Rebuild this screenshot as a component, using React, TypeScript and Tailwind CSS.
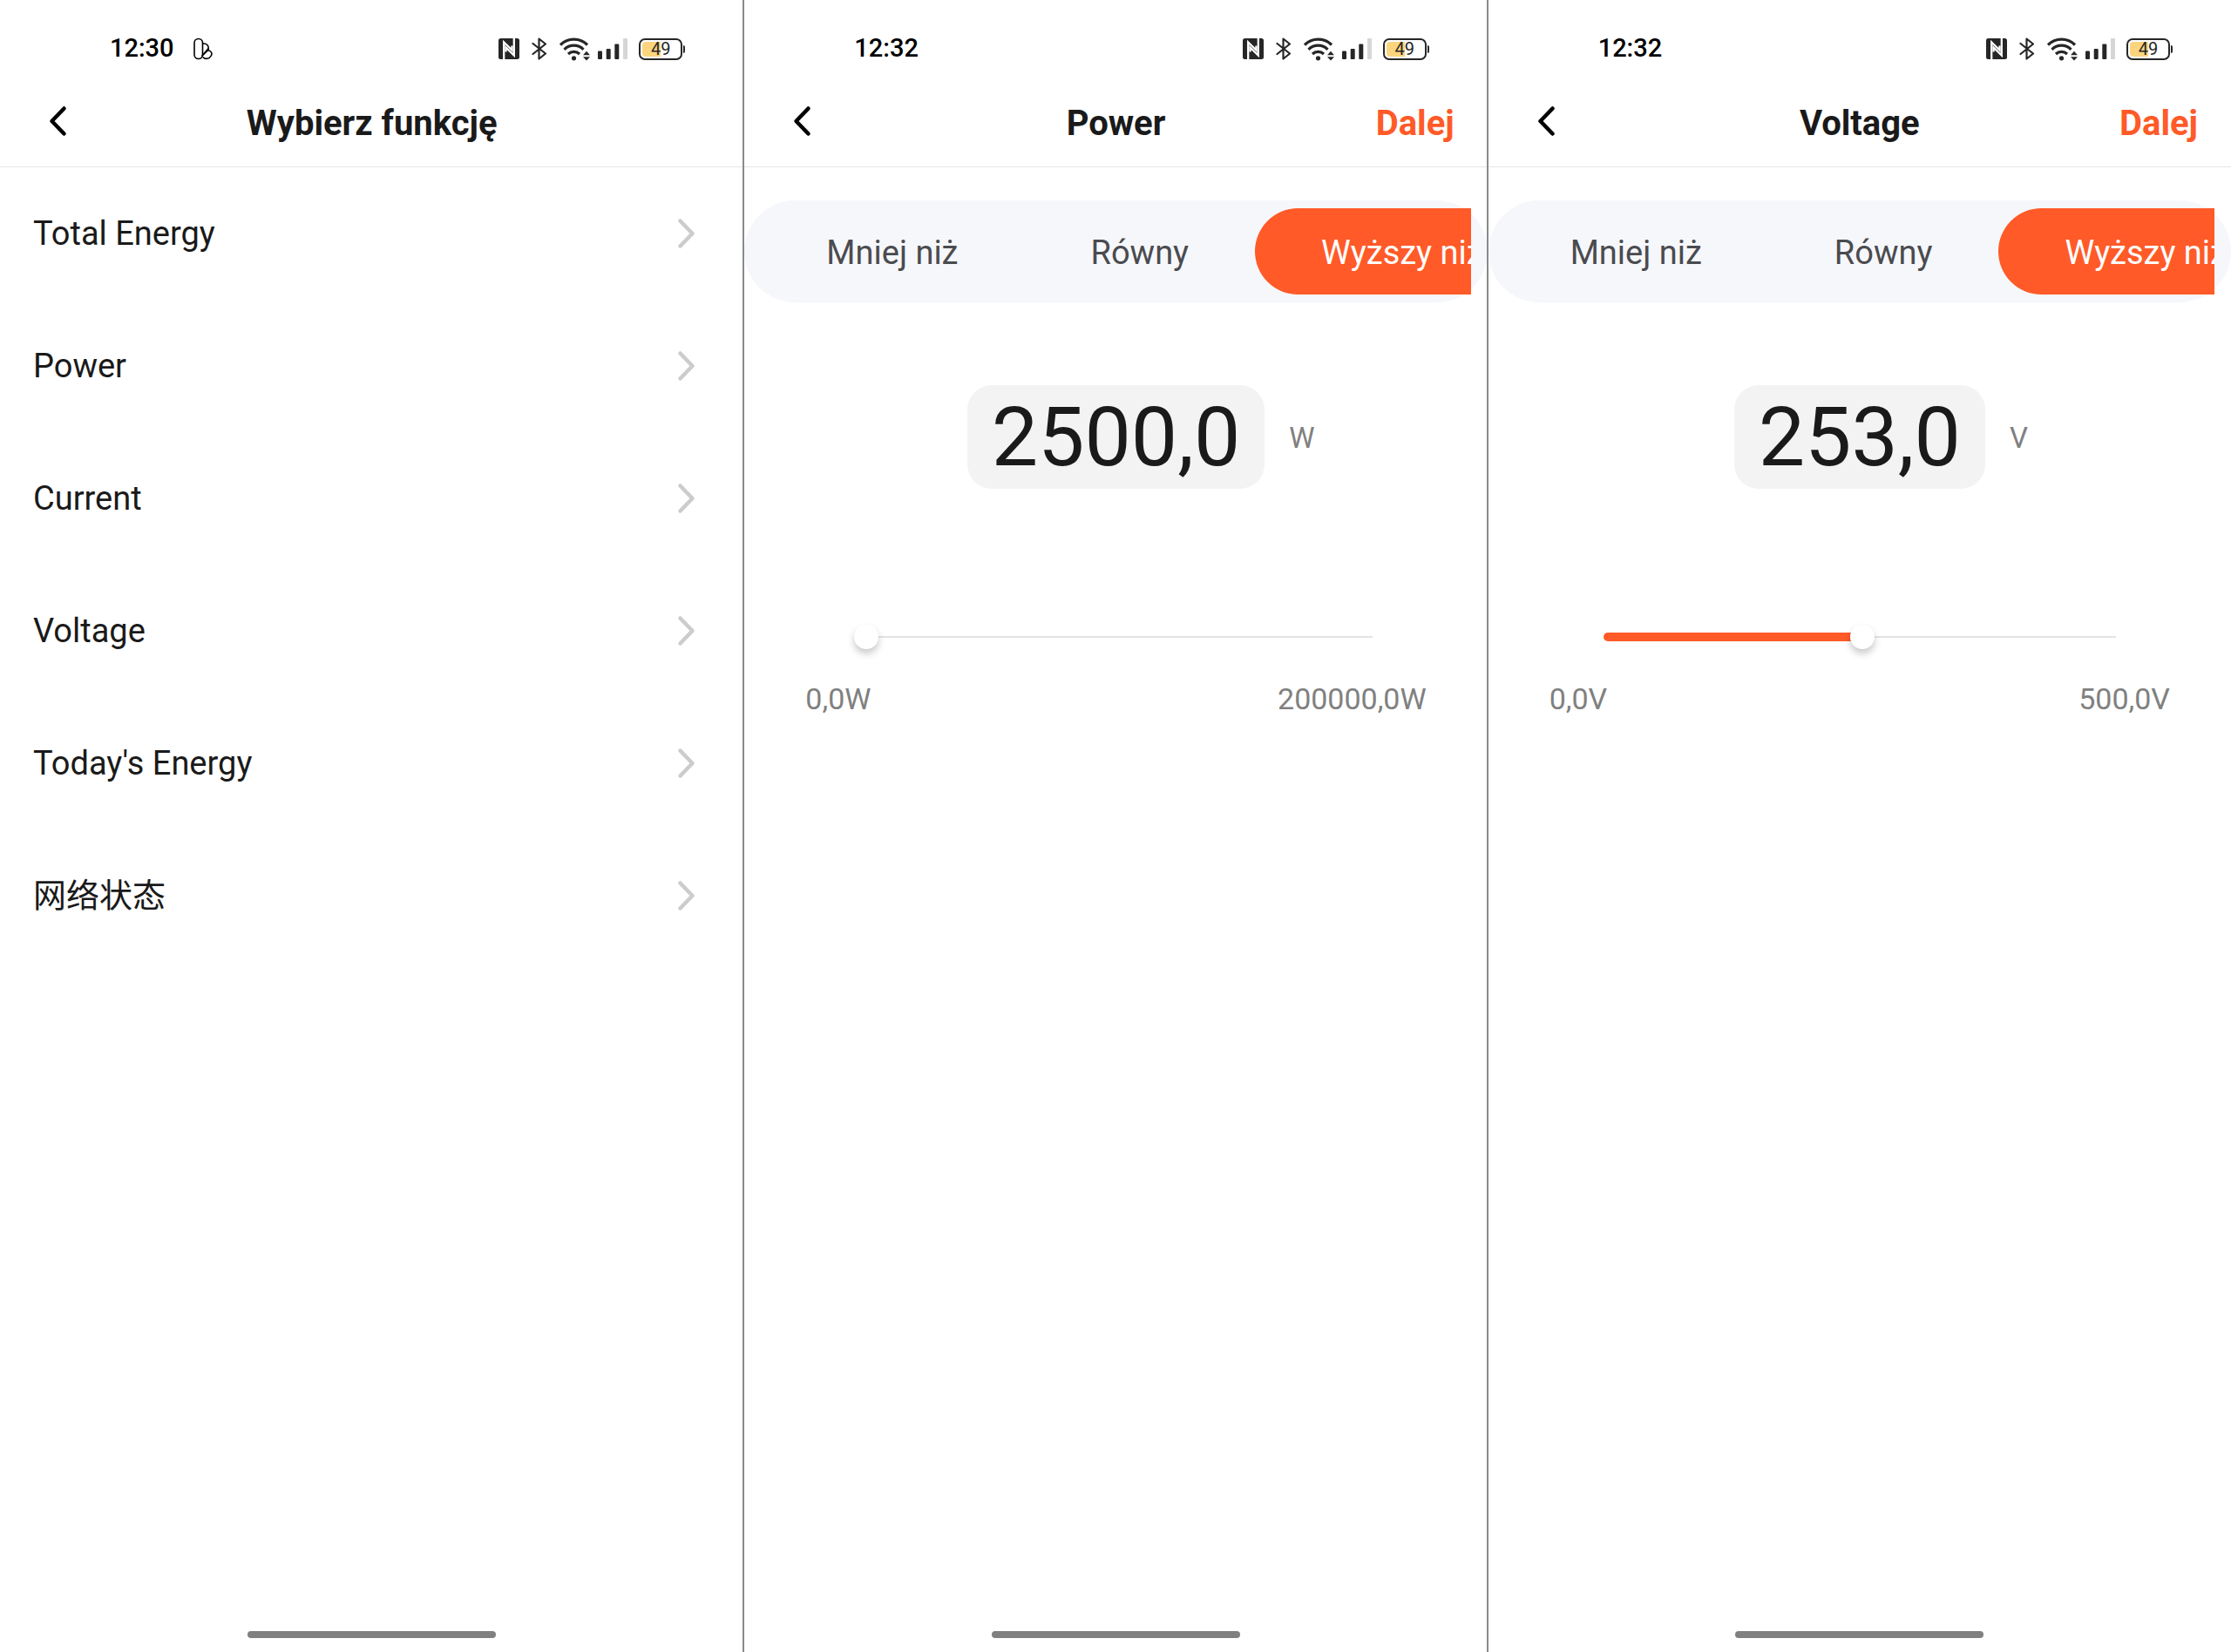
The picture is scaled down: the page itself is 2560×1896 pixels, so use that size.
import { useId, useState } from "react";

const functions = ["Total Energy", "Power", "Current", "Voltage", "Today's Energy", "网络状态"];
const comparisons = ["Mniej niż", "Równy", "Wyższy niż"];

function PillsIcon() {
  return (
    <svg width="22" height="26" viewBox="0 0 22 26" fill="none" stroke="#000" strokeWidth="1.6">
      <rect x="1" y="1.5" width="9.5" height="23" rx="4.75" />
      <path d="M10.5 7h1.700a5 5 0 0 1 5 5v2.500" />
      <path d="M10.500 20.500 16 15.200a3.800 3.800 0 0 1 4.200 5.800c-1.800 3.800-6.600 4.400-9.400 1.600" />
      <path d="M9.500 21.500 17.200 12.500" />
    </svg>
  );
}

function NfcIcon() {
  return (
    <svg width="24" height="24" viewBox="0 0 24 24">
      <rect width="24" height="24" rx="2.500" fill="#262626" />
      <path d="M6.200 24V4.500L15.500 13.500V8.500" fill="none" stroke="#fff" strokeWidth="2.300" />
      <path d="M17.800 0V19.500L8.500 10.500V15.500" fill="none" stroke="#fff" strokeWidth="2.300" />
    </svg>
  );
}

function BluetoothIcon() {
  return (
    <svg width="18" height="26" viewBox="0 0 18 26" fill="none" stroke="#262626" strokeWidth="2.200" strokeLinejoin="round" strokeLinecap="round">
      <path d="M1.500 7 16 18.500 8.500 24.500V1.500L16 7.500 1.500 19" />
    </svg>
  );
}

function WifiIcon() {
  return (
    <svg width="36" height="27" viewBox="0 0 36 27">
      <g fill="none" stroke="#262626" strokeWidth="3.200">
        <path d="M1 8.500a22 22 0 0 1 31 0" />
        <path d="M5.500 13.800a15.500 15.500 0 0 1 22 0" />
        <path d="M10 19a9.500 9.500 0 0 1 13 0" />
      </g>
      <circle cx="16.500" cy="23.800" r="2.600" fill="#262626" />
      <path d="M27 20.200 31 15.800 35 20.200zM27 22.200 31 26.600 35 22.200z" fill="#262626" />
    </svg>
  );
}

function SignalIcon() {
  return (
    <svg width="35" height="24" viewBox="0 0 35 24" fill="#262626">
      <rect x="0" y="14.500" width="5" height="9.500" rx="1" />
      <rect x="9.700" y="12" width="5" height="12" rx="1" />
      <rect x="19.300" y="6.500" width="5" height="17.500" rx="1" />
      <rect x="29" y="0" width="5" height="24" rx="1" fill="#d6d6d6" />
    </svg>
  );
}

function Battery() {
  return (
    <div className="flex items-center gap-px">
      <div className="grid h-[25px] w-[50px] rounded-[7px] border-2 border-[#262626] p-0.5">
        <div className="col-start-1 row-start-1 w-[21px] rounded-l-[4px] bg-[#fbd57e]" />
        <span className="col-start-1 row-start-1 self-center text-center text-[20px] leading-[17px] text-[#262626]">49</span>
      </div>
      <div className="h-[9px] w-[2px] rounded-r-sm bg-[#262626]" />
    </div>
  );
}

function StatusBar({ time, badge }: { time: string; badge?: boolean }) {
  return (
    <div className="flex h-28 items-center justify-between pr-[67px] pl-[126px]">
      <div className="flex items-center gap-[22px] text-[29px] font-medium text-black">
        <span>{time}</span>
        {badge && <PillsIcon />}
      </div>
      <div className="flex items-center">
        <NfcIcon />
        <div className="ml-[14px]"><BluetoothIcon /></div>
        <div className="ml-[14px]"><WifiIcon /></div>
        <div className="ml-2"><SignalIcon /></div>
        <div className="ml-3"><Battery /></div>
      </div>
    </div>
  );
}

function Header({ title, action }: { title: string; action?: string }) {
  return (
    <header className="grid h-20 grid-cols-[1fr_auto_1fr] items-start border-b border-[#e5e5e5] px-[38px] text-[40px] leading-[60px] font-bold text-[#1a1a1a]">
      <button type="button" aria-label="Wstecz" className="flex h-[54px] w-14 items-center pl-[18px]">
        <svg width="22" height="36" viewBox="0 0 22 36" fill="none" stroke="#000" strokeWidth="4.500" strokeLinecap="round" strokeLinejoin="round">
          <path d="M17.500 3.500 3.500 18l14 14.500" />
        </svg>
      </button>
      <h1>{title}</h1>
      {action && <button type="button" className="justify-self-end text-[#ff5a28]">{action}</button>}
    </header>
  );
}

function HomeIndicator() {
  return <div className="mx-auto mt-auto mb-4 h-2 w-[285px] shrink-0 rounded-full bg-[#808080]" />;
}

function FunctionList() {
  return (
    <section className="flex flex-col">
      <StatusBar time="12:30" badge />
      <Header title="Wybierz funkcję" />
      <ul>
        {functions.map((name) => (
          <li key={name}>
            <button type="button" className="flex h-[152px] w-full items-center justify-between pr-[54px] pl-[38px] text-left text-[38px] text-[#1a1a1a]">
              <span>{name}</span>
              <svg width="22" height="36" viewBox="0 0 22 36" fill="none" stroke="#ccc" strokeWidth="4.500" strokeLinecap="round" strokeLinejoin="round">
                <path d="M3.500 3.500 17.500 18l-14 14.500" />
              </svg>
            </button>
          </li>
        ))}
      </ul>
      <HomeIndicator />
    </section>
  );
}

interface ConditionProps {
  title: string;
  unit: string;
  initial: number;
  max: number;
}

function Condition({ title, unit, initial, max }: ConditionProps) {
  const [value, setValue] = useState(initial);
  const [selected, setSelected] = useState(2);
  const id = useId();
  const format = (n: number) => n.toFixed(1).replace(".", ",");

  return (
    <section className="-ml-px flex min-w-0 flex-col border-l-2 border-[#8a8a8a]">
      <StatusBar time="12:32" />
      <Header title={title} action="Dalej" />
      <div className="mt-[38px] rounded-full bg-[#f6f7fb] py-[9px] pr-[19px] pl-[18px]">
        <div role="tablist" className="flex overflow-hidden">
          {comparisons.map((label, i) => (
            <button
              key={label}
              type="button"
              role="tab"
              aria-selected={i === selected}
              onClick={() => setSelected(i)}
              className={`h-[99px] shrink-0 rounded-full px-[76px] pt-[3px] text-[38px] whitespace-nowrap ${i === selected ? "bg-[#ff5a28] text-white" : "text-[#4a4b4f]"}`}
            >
              {label}
            </button>
          ))}
        </div>
      </div>
      <div className="mt-[95px] grid grid-cols-[1fr_auto_1fr] items-center gap-7 text-[#1a1a1a]">
        <output htmlFor={id} className="col-start-2 rounded-[28px] bg-[#f3f3f3] px-7 text-[95px] leading-[119px]">
          {format(value)}
        </output>
        <span className="pt-[3px] text-[33px] text-[#808080]">{unit}</span>
      </div>
      <div className="mt-[156px] px-[118px]">
        <div className="grid items-center">
          <div className="col-start-1 row-start-1 mx-[14px] flex items-center">
            <div className="h-[10px] rounded-full bg-[#ff5a28]" style={{ width: `${(value / max) * 100}%` }} />
            <div className="h-[2px] flex-1 bg-[#e3e3e3]" />
          </div>
          <input
            id={id}
            type="range"
            aria-label={title}
            min={0}
            max={max}
            step={0.1}
            value={value}
            onChange={(e) => setValue(Number(e.target.value))}
            className="col-start-1 row-start-1 h-7 w-full appearance-none bg-transparent [&::-webkit-slider-thumb]:size-7 [&::-webkit-slider-thumb]:appearance-none [&::-webkit-slider-thumb]:rounded-full [&::-webkit-slider-thumb]:bg-white [&::-webkit-slider-thumb]:shadow-[0_5px_9px_rgba(0,0,0,0.22)]"
          />
        </div>
      </div>
      <div className="mt-8 flex justify-between px-[70px] text-[34px] text-[#808080]">
        <span>{format(0)}{unit}</span>
        <span>{format(max)}{unit}</span>
      </div>
      <HomeIndicator />
    </section>
  );
}

export default function App() {
  return (
    <main className="grid min-h-screen grid-cols-3 bg-white font-['Roboto','Noto_Sans_CJK_SC',sans-serif]">
      <FunctionList />
      <Condition title="Power" unit="W" initial={2500} max={200000} />
      <Condition title="Voltage" unit="V" initial={253} max={500} />
    </main>
  );
}
